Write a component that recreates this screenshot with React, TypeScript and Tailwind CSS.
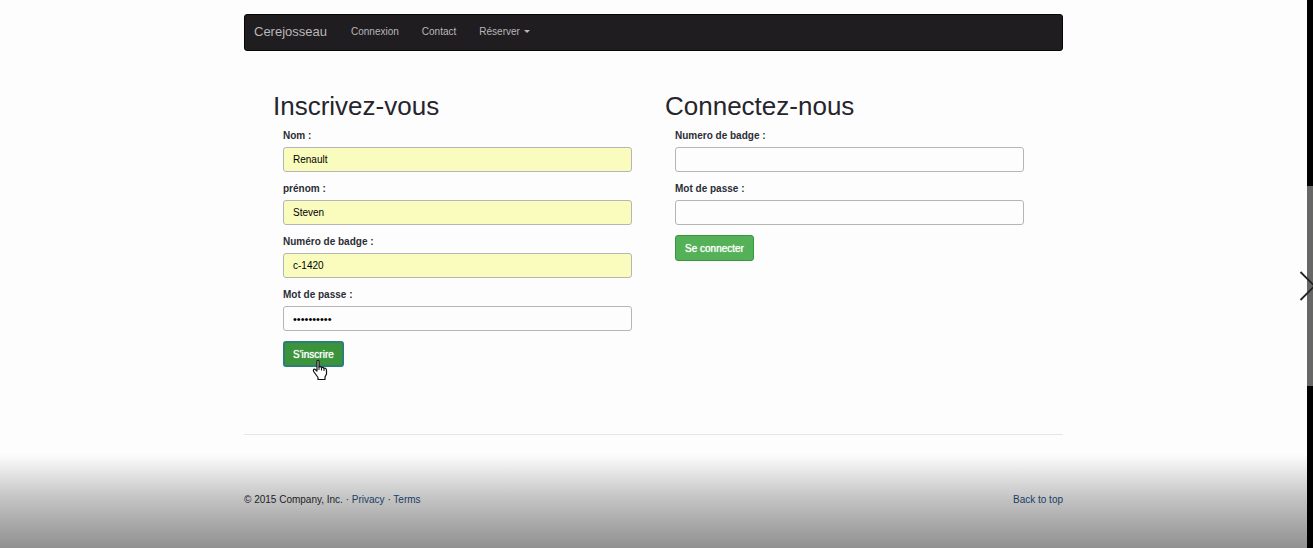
import { useState } from "react";

type FieldProps = {
  id: string;
  label: string;
  type?: string;
  initial?: string;
  filled?: boolean;
};

function Field({ id, label, type = "text", initial = "", filled = false }: FieldProps) {
  const [value, setValue] = useState(initial);
  return (
    <div className="flex flex-col gap-[5px]">
      <label htmlFor={id} className="text-[10px] leading-[13px] font-bold text-[#2b2d35]">
        {label}
      </label>
      <input
        id={id}
        type={type}
        value={value}
        onChange={(e) => setValue(e.target.value)}
        className={`h-[25px] w-full rounded-[3px] border border-[#b5b5b8] px-[9px] text-black outline-none ${
          type === "password" ? "text-[11px]" : "text-[10px]"
        } ${filled ? "bg-[#f9fcbd]" : "bg-[#fefdfe]"}`}
      />
    </div>
  );
}

function HandCursor() {
  return (
    <svg
      aria-hidden="true"
      viewBox="0 0 16 22"
      className="pointer-events-none absolute top-[18px] left-[29px] h-[22px] w-4"
    >
      <path
        d="M5 2 Q6 .5 7 2 V8 Q8.500 7 9.500 8.500 Q11 7.800 12 9.300 Q14.500 8.800 14.500 11.500 V15 L13 18 V20.500 H6 V18.500 L2 13 Q.500 10.500 2.500 10 L5 12 Z"
        fill="#fff"
        stroke="#111"
        strokeWidth="1.200"
        strokeLinejoin="round"
      />
      <path d="M7 7.500V11M9.500 8.500V11.500M12 9.500V12" stroke="#111" strokeWidth="1" fill="none" />
    </svg>
  );
}

export default function App() {
  return (
    <div className="flex min-h-screen overflow-hidden bg-[#fefdfe] font-['Liberation_Sans',Arial,sans-serif] text-[10px] text-[#2b2b30]">
      <div className="relative min-w-0 flex-1">
        <div className="mx-auto max-w-[819px] pt-[14px]">
          <nav className="flex h-[37px] items-center rounded-[3px] border border-[#070607] bg-[#201d20] px-[9px] pb-[2px] text-[#b9b7b9]">
            <a href="#" className="mr-6 text-[13px] leading-4">
              Cerejosseau
            </a>
            <div className="flex items-center gap-[23px] leading-4">
              <a href="#connexion">Connexion</a>
              <a href="#contact">Contact</a>
              <button type="button" className="flex items-center gap-1">
                Réserver
                <svg viewBox="0 0 6 3" className="h-[3px] w-[6px]" aria-hidden="true">
                  <path d="M0 0H6L3 3Z" fill="currentColor" />
                </svg>
              </button>
            </div>
          </nav>

          <main className="grid grid-cols-2 gap-[23px] px-[29px] pt-10">
            <section>
              <h1 className="text-[26px] leading-[30px] text-[#25252b]">Inscrivez-vous</h1>
              <form
                className="flex flex-col items-stretch gap-[10px] px-[10px] pt-2"
                onSubmit={(e) => e.preventDefault()}
              >
                <Field id="nom" label="Nom :" initial="Renault" filled />
                <Field id="prenom" label="prénom :" initial="Steven" filled />
                <Field id="badge" label="Numéro de badge :" initial="c-1420" filled />
                <Field id="passe" label="Mot de passe :" type="password" initial="azerty1234" />
                <div className="relative self-start">
                  <button
                    type="submit"
                    className="h-[26px] rounded-[3px] border-2 border-[#2b7f76] bg-[#3b943c] px-2 text-white [text-shadow:0_0_1px_#fff]"
                  >
                    S'inscrire
                  </button>
                  <HandCursor />
                </div>
              </form>
            </section>

            <section>
              <h1 className="text-[26px] leading-[30px] text-[#25252b]">Connectez-nous</h1>
              <form
                className="flex flex-col gap-[10px] px-[10px] pt-2"
                onSubmit={(e) => e.preventDefault()}
              >
                <Field id="login-badge" label="Numero de badge :" />
                <Field id="login-passe" label="Mot de passe :" type="password" />
                <button
                  type="submit"
                  className="h-[26px] self-start rounded-[3px] border border-[#3b963d] bg-[#55b157] px-[9px] text-white [text-shadow:0_0_1px_#fff]"
                >
                  Se connecter
                </button>
              </form>
            </section>
          </main>

          <hr className="mt-[67px] border-[#e6e5e8]" />

          <footer className="flex justify-between pt-[57px] pb-8 leading-4">
            <p>
              © 2015 Company, Inc. ·{" "}
              <a href="#privacy" className="text-[#1f5283]">
                Privacy
              </a>{" "}
              ·{" "}
              <a href="#terms" className="text-[#1f5283]">
                Terms
              </a>
            </p>
            <a href="#" className="text-[#1f5283]">
              Back to top
            </a>
          </footer>
        </div>
        <div className="pointer-events-none absolute inset-x-0 bottom-0 h-[94px] bg-linear-to-b from-black/0 via-black/24 to-black/43" />
      </div>

      <aside className="relative flex w-[6px] shrink-0 flex-col bg-black pt-[186px]">
        <div className="h-[200px] bg-[#676765]" />
        <svg
          aria-hidden="true"
          viewBox="0 0 14 30"
          className="absolute top-[271px] right-0 h-[30px] w-[14px]"
        >
          <path d="M1.500 1 L15.500 15 L1.500 29" fill="none" stroke="#222" strokeWidth="1.800" />
        </svg>
      </aside>
    </div>
  );
}
